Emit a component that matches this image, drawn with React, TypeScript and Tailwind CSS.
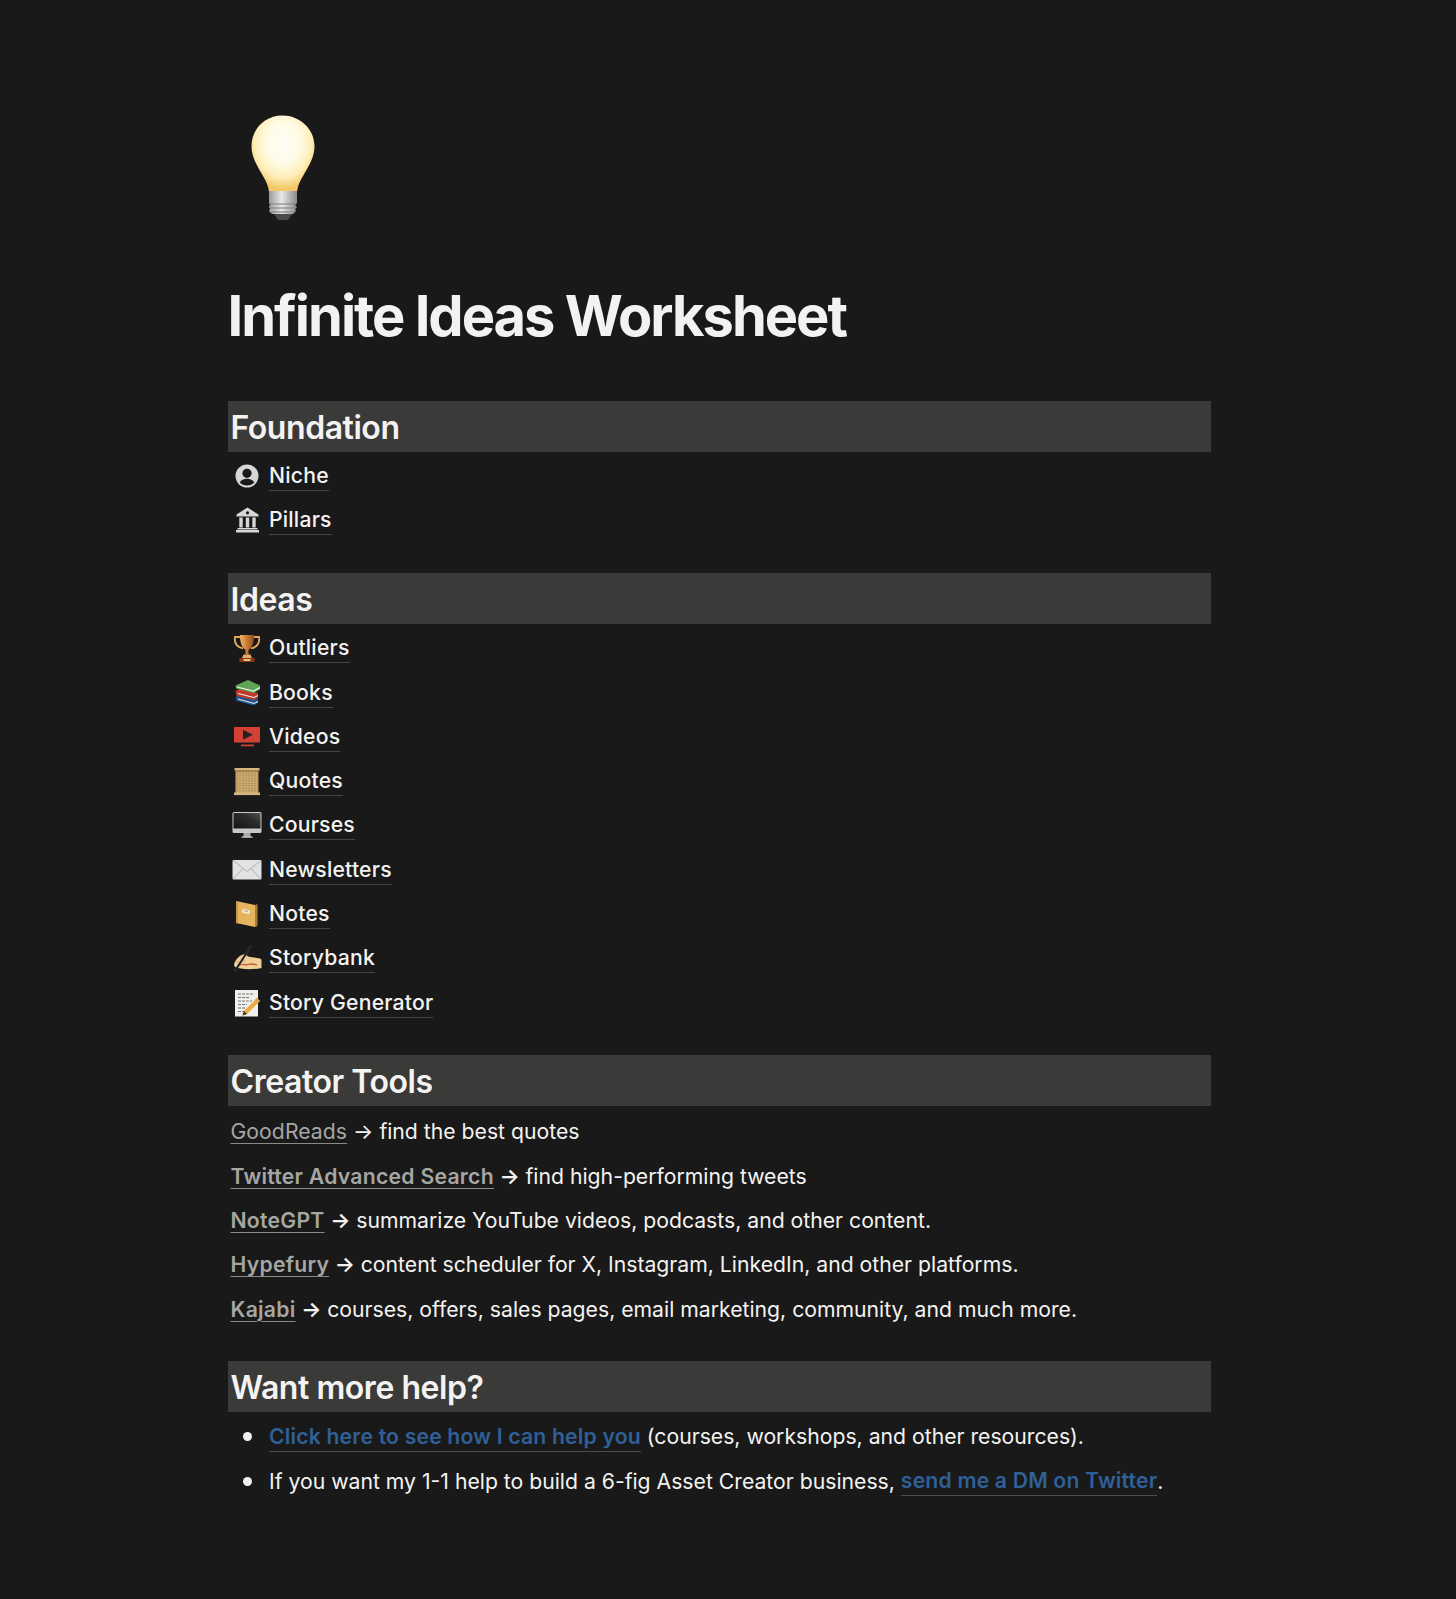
import React from "react";

const Bulb = () => (
  <svg width="64" height="106" viewBox="0 0 64 106" className="block">
    <defs>
      <radialGradient id="bulbGlass" cx="50%" cy="36%" r="60%">
        <stop offset="0" stopColor="#fffef8" />
        <stop offset="0.45" stopColor="#fffbe6" />
        <stop offset="0.75" stopColor="#feeeb8" />
        <stop offset="1" stopColor="#f2c766" />
      </radialGradient>
      <linearGradient id="bulbBase" x1="0" x2="1" y1="0" y2="0">
        <stop offset="0" stopColor="#9a9a9a" />
        <stop offset="0.45" stopColor="#e8e8e8" />
        <stop offset="1" stopColor="#8a8a8a" />
      </linearGradient>
    </defs>
    <path d="M31.500 0.500C14 0.500 0.500 14 0.500 31c0 9 3.500 16 8 24 4 7 8.500 13 9.500 22h28c1-9 5.500-15 9.500-22 4.500-8 8-15 8-24C63.500 14 49 0.500 31.500 0.500Z" fill="url(#bulbGlass)" />
    <rect x="18" y="76" width="28" height="9" fill="url(#bulbBase)" />
    <path d="M18 85h28v3l-2 2 2 2-2 2 1 2-3 3H21l-3-3 1-2-1-2 1-2-1-2Z" fill="url(#bulbBase)" />
    <path d="M19 89h26M19 93h26M20 97h24" stroke="#7d7d7d" strokeWidth="1" />
    <path d="M23 99h18l-4 6h-10Z" fill="#4a4a4a" />
  </svg>
);

const Niche = () => (
  <svg width="24" height="24" viewBox="0 0 24 24">
    <circle cx="12" cy="12" r="11.500" fill="#d6d6d4" />
    <circle cx="12" cy="9.300" r="4.600" fill="#191919" />
    <path d="M4.800 18.600c1.300-2.800 4-3.900 7.200-3.900s5.900 1.100 7.200 3.900C17.500 20.500 15 21.500 12 21.500s-5.500-1-7.200-2.900Z" fill="#191919" />
  </svg>
);

const Pillars = () => (
  <svg width="25" height="26" viewBox="0 0 25 26" fill="#d6d6d4">
    <path d="M12.500 0.500 23.500 7.500v2H1.500v-2Z" />
    <circle cx="12.500" cy="5.800" r="1.600" fill="#191919" />
    <rect x="4.300" y="10.500" width="3.400" height="10" />
    <rect x="10.800" y="10.500" width="3.400" height="10" />
    <rect x="17.300" y="10.500" width="3.400" height="10" />
    <rect x="2.500" y="21" width="20" height="1.500" />
    <rect x="1" y="23" width="23" height="2.500" />
  </svg>
);

const Trophy = () => (
  <svg width="28" height="29" viewBox="0 0 28 29">
    <defs>
      <linearGradient id="gold" x1="0" x2="1" y1="0" y2="0">
        <stop offset="0" stopColor="#f0b76c" />
        <stop offset="0.5" stopColor="#c97a34" />
        <stop offset="1" stopColor="#8f4f1d" />
      </linearGradient>
    </defs>
    <path d="M7 3H2c-1 6 2 10 8 11.500M21 3h5c1 6-2 10-8 11.500" fill="none" stroke="#e6a85e" strokeWidth="1.800" />
    <path d="M7 1h14c0 7-1.500 12-5.500 15v4.500h-3V16C8.500 13 7 8 7 1Z" fill="url(#gold)" />
    <path d="M10.500 20.500h7l1.500 3.500h-10Z" fill="#e1ad6a" />
    <rect x="6.500" y="24" width="15" height="4" fill="#8a3416" />
    <rect x="10.500" y="25" width="7" height="2" fill="#e7c07c" />
  </svg>
);

const Books = () => (
  <svg width="27" height="27" viewBox="0 0 27 27">
    <path d="M1.500 18 6 15l18 5v4l-4 2.500L2.500 22Z" fill="#23528f" />
    <path d="M4 20 20 24.500l4-2" fill="none" stroke="#e8e8e8" strokeWidth="1.100" />
    <path d="M1.500 12 7 9l17 5v5l-4 2L2.500 17Z" fill="#bf3b2f" />
    <path d="M4 14.500 20 18.500l4-2" fill="none" stroke="#ececec" strokeWidth="1.100" />
    <path d="M1.500 6.500 14 1l12 5.500v4L19.500 14 2 9.500Z" fill="#5fa654" />
    <path d="M3 8 19.500 12l6.500-3.500" fill="none" stroke="#ededed" strokeWidth="1.200" />
  </svg>
);

const Video = () => (
  <svg width="28" height="28" viewBox="0 0 28 28">
    <rect x="1" y="4" width="26" height="15.500" rx="0.500" fill="#d24036" />
    <path d="M10 6.800 19.800 11.800 10 16.800Z" fill="#26221f" />
    <rect x="8" y="21.500" width="13" height="1.800" fill="#d24036" />
  </svg>
);

const Scroll = () => (
  <svg width="28" height="29" viewBox="0 0 28 29">
    <defs>
      <pattern id="scrollLines" width="3" height="2.500" patternUnits="userSpaceOnUse">
        <rect width="3" height="2.500" fill="#cba86c" />
        <rect y="1" width="2" height="0.800" fill="#a98650" />
      </pattern>
    </defs>
    <rect x="2.500" y="3" width="23" height="23" fill="url(#scrollLines)" />
    <rect x="1.500" y="1" width="25" height="2.600" fill="#d8b57c" />
    <rect x="1.500" y="3.600" width="25" height="0.800" fill="#6a4e26" />
    <rect x="1" y="25.500" width="26" height="2.600" fill="#d8b57c" />
  </svg>
);

const Monitor = () => (
  <svg width="30" height="28" viewBox="0 0 30 28">
    <defs>
      <linearGradient id="screen" x1="0" x2="1" y1="1" y2="0">
        <stop offset="0" stopColor="#141414" />
        <stop offset="0.65" stopColor="#2d2d2d" />
        <stop offset="1" stopColor="#555" />
      </linearGradient>
    </defs>
    <rect x="0.500" y="1" width="29" height="21" rx="1.500" fill="#c8c8c8" />
    <rect x="1.500" y="2" width="27" height="15.500" fill="url(#screen)" />
    <rect x="11.500" y="22" width="7" height="4" fill="#a9a9a9" />
    <rect x="9.500" y="25.500" width="11" height="1.200" fill="#d8d8d8" />
  </svg>
);

const Mail = () => (
  <svg width="30" height="28" viewBox="0 0 30 28">
    <rect x="0.500" y="4" width="29" height="19.500" rx="0.800" fill="#e2e2e2" />
    <path d="M1 4.500 15 15.500 29 4.500M1 23 11 12.500M29 23 19 12.500" fill="none" stroke="#a8a8a8" strokeWidth="0.900" />
  </svg>
);

const Notebook = () => (
  <svg width="26" height="28" viewBox="0 0 26 28">
    <path d="M2 1 21 5v22L2 23Z" fill="#e6b45e" />
    <path d="M21 5l2.500-1v22L21 27Z" fill="#a97b3a" />
    <path d="M2 1 4 2v21.500L2 23Z" fill="#c8974a" />
    <rect x="8" y="9.500" width="8" height="4" rx="1.500" fill="#f3e8cf" transform="rotate(10 12 11.500)" />
    <path d="M10 11h4" stroke="#8d8d8d" strokeWidth="0.800" transform="rotate(10 12 11.500)" />
  </svg>
);

const Writing = () => (
  <svg width="29" height="27" viewBox="0 0 29 27">
    <path d="M1 20C2 14 7 10 12 9l3 2.500c4 1 8 1 12 2l1.500 1v8.500c-7 1.500-15 1.500-21 .500C4 23 1.500 22.500 1 20Z" fill="#efcf95" />
    <path d="M7 20c3-1.500 5 .500 8-.500s6-.500 9 .500" fill="none" stroke="#c85f36" strokeWidth="1.300" />
    <path d="M8 12.500 12 17M4 16 8 19.500" stroke="#b78d59" strokeWidth="0.800" />
    <path d="M18 1 2 26" stroke="#5a5a5a" strokeWidth="2.200" />
    <path d="M18 1 2 26" stroke="#0e0e0e" strokeWidth="1.300" />
  </svg>
);

const Memo = () => (
  <svg width="28" height="28" viewBox="0 0 28 28">
    <rect x="2" y="1" width="23" height="26.500" fill="#f0efe9" />
    <path d="M5 5h16M5 8.500h12M5 12h14M5 15.500h9M5 19h8M5 22.500h6" stroke="#777" strokeWidth="1" strokeDasharray="3 1" />
    <path d="M24 9l3 3-13 13-4.500 1.500L11 22Z" fill="#eeaa43" />
    <path d="M24 9l3 3-2 2-3-3Z" fill="#d9a25e" />
    <path d="M11 22l3 3-4.500 1.500Z" fill="#3a3128" />
  </svg>
);

type Row = { icon: React.ReactNode; label: string };

const foundation: Row[] = [
  { icon: <Niche />, label: "Niche" },
  { icon: <Pillars />, label: "Pillars" },
];

const ideas: Row[] = [
  { icon: <Trophy />, label: "Outliers" },
  { icon: <Books />, label: "Books" },
  { icon: <Video />, label: "Videos" },
  { icon: <Scroll />, label: "Quotes" },
  { icon: <Monitor />, label: "Courses" },
  { icon: <Mail />, label: "Newsletters" },
  { icon: <Notebook />, label: "Notes" },
  { icon: <Writing />, label: "Storybank" },
  { icon: <Memo />, label: "Story Generator" },
];

const tools = [
  { name: "GoodReads", bold: false, rest: "find the best quotes" },
  { name: "Twitter Advanced Search", bold: true, rest: "find high-performing tweets" },
  { name: "NoteGPT", bold: true, rest: "summarize YouTube videos, podcasts, and other content." },
  { name: "Hypefury", bold: true, rest: "content scheduler for X, Instagram, LinkedIn, and other platforms." },
  { name: "Kajabi", bold: true, rest: "courses, offers, sales pages, email marketing, community, and much more." },
];

const Heading = ({ children }: { children: React.ReactNode }) => (
  <h2 className="h-[51px] bg-[#3a3a39] pl-[3px] text-[32px] leading-[53px] font-semibold tracking-[-0.45px] text-[#f4f3f1]">
    {children}
  </h2>
);

const PageRow = ({ icon, label }: Row) => (
  <div className="flex h-[44.3px] items-center">
    <div className="flex w-[41.5px] shrink-0 justify-center pr-[2px]">{icon}</div>
    <span className="border-b border-[#454545] text-[21.2px] leading-[29px] font-medium tracking-[0.2px] text-[#f4f3f1]">{label}</span>
  </div>
);

export default function App() {
  return (
    <div className="h-[1599px] bg-[#191919] pt-[115px] pl-[227.5px] font-['Inter',sans-serif] text-[#f4f3f1] antialiased">
      <div className="w-[983px]">
        <div className="pl-[23px]">
          <Bulb />
        </div>
        <h1 className="mt-[63px] h-[65px] text-[56px] leading-[65px] font-bold tracking-[-2px] text-[#f2f2f0]">
          Infinite Ideas Worksheet
        </h1>

        <section className="mt-[52px]">
          <Heading>Foundation</Heading>
          <div className="mt-[1.5px]">
            {foundation.map((r) => (
              <PageRow key={r.label} {...r} />
            ))}
          </div>
        </section>

        <section className="mt-[30.5px]">
          <Heading>Ideas</Heading>
          <div className="mt-[2.5px]">
            {ideas.map((r) => (
              <PageRow key={r.label} {...r} />
            ))}
          </div>
        </section>

        <section className="mt-[30.5px]">
          <Heading>Creator Tools</Heading>
          <div className="mt-[3.5px] pl-[3px]">
            {tools.map((t) => (
              <p key={t.name} className="flex h-[44.3px] items-center text-[21.2px] leading-[29px] whitespace-pre text-[#f4f3f1]">
                <span className={t.bold ? "font-semibold tracking-[0.25px]" : "font-normal tracking-[0.05px]"}>
                  <span className="text-[#a6a6a3] underline decoration-[#8a8a87] decoration-1 underline-offset-[4px]">{t.name}</span>
                  {" → "}
                </span>
                <span>{t.rest}</span>
              </p>
            ))}
          </div>
        </section>

        <section className="mt-[29.5px]">
          <Heading>Want more help?</Heading>
          <ul className="mt-[3px] text-[21.2px] leading-[29px] text-[#f4f3f1]">
            <li className="flex h-[44.3px] items-center whitespace-pre">
              <span className="mr-[17.5px] ml-[15px] h-[9px] w-[9px] shrink-0 rounded-full bg-[#f1f1ef]" />
              <span className="border-b border-[#4a4a4a] font-semibold tracking-[0.17px] text-[#2f6098]">Click here to see how I can help you</span>
              <span>{" (courses, workshops, and other resources)."}</span>
            </li>
            <li className="flex h-[44.3px] items-center whitespace-pre">
              <span className="mr-[17.5px] ml-[15px] h-[9px] w-[9px] shrink-0 rounded-full bg-[#f1f1ef]" />
              <span>{"If you want my 1-1 help to build a 6-fig Asset Creator business, "}</span>
              <span className="border-b border-[#4a4a4a] font-semibold tracking-[0.17px] text-[#2f6098]">send me a DM on Twitter</span>
              <span>.</span>
            </li>
          </ul>
        </section>
      </div>
    </div>
  );
}
